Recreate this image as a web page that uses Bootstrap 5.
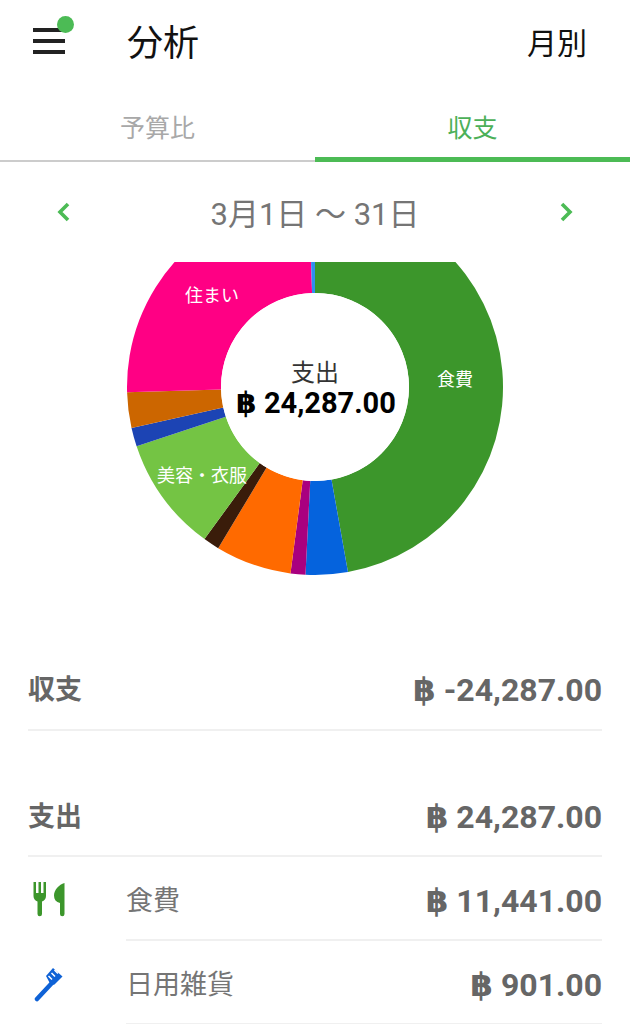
<!DOCTYPE html>
<html lang="ja">
    <head>
        <meta charset="UTF-8" />
        <meta name="viewport" content="width=device-width, initial-scale=1.0" />
        <title>分析</title>
        <link href="https://cdn.jsdelivr.net/npm/bootstrap@5.3.3/dist/css/bootstrap.min.css" rel="stylesheet">
        <style>
            body{
                font-family:Roboto,"Noto Sans CJK JP",sans-serif;
                background:#fff;
                color:#666;
                height:1024px;
                overflow:hidden;
            }
            .app-head{height:88px;padding:0 43px 0 33px;color:#111}
            .menu-btn{width:32px;height:25px;position:relative;margin-bottom:8px;margin-right:62px}
            .menu-btn i{display:block;height:4px;background:#222;margin-bottom:7px}
            .menu-dot{position:absolute;left:24px;top:-12px;width:17px;height:17px;border-radius:50%;background:#4cbb55}
            .head-title{font-size:36px;line-height:1}
            .head-link{font-size:30px;line-height:1}
            .tab-row{height:74px}
            .tab-item{font-size:25px;line-height:1;height:74px;padding-top:28px;text-align:center;color:#a8a8a8;border-bottom:2px solid #ccc}
            .tab-item.active-tab{color:#4cb058;border-bottom:5px solid #4cbb55}
            .date-nav{height:100px;padding:4px 57px 0 57px;font-size:31px;line-height:1;color:#757575}
            .date-nav svg{margin-bottom:4px}
            .donut-box{height:360px}
            .donut-box svg{display:block}
            .baht{font-family:"DejaVu Sans",sans-serif;font-size:1.02em;line-height:.9}
            .sum-row{padding:0 28px}
            .sum-line{border-bottom:2px solid #f0f0f0;font-weight:700;font-size:32px;line-height:1}
            .sum-label{font-size:27px}
            .line-a{height:84px;padding-top:4px;margin-top:25px}
            .line-b{height:84px;margin-top:42px;padding-top:6px}
            .cat-row{height:84px;padding:0 28px;color:#666}
            .cat-icon{width:98px;flex:none}
            .cat-body{border-bottom:2px solid #f0f0f0;height:84px;padding-top:6px}
            .cat-name{font-size:27px;line-height:1;font-weight:400;color:#757575}
            .cat-amount{font-size:32px;line-height:1;font-weight:700}
        </style>
    </head>
    <body>
        <div class="app-head d-flex align-items-center">
            <div class="menu-btn"><i></i><i></i><i></i><span class="menu-dot"></span></div>
            <div class="head-title">分析</div>
            <div class="head-link ms-auto">月別</div>
        </div>

        <div class="row g-0 tab-row">
            <div class="col-6 tab-item">予算比</div>
            <div class="col-6 tab-item active-tab">収支</div>
        </div>

        <div class="date-nav d-flex align-items-center justify-content-between">
            <svg width="13" height="20" viewBox="0 0 13 20"><path d="M11 2 3 10l8 8" fill="none" stroke="#4cbb55" stroke-width="3.6"/></svg>
            <div>3月1日 〜 31日</div>
            <svg width="13" height="20" viewBox="0 0 13 20"><path d="M2 2l8 8-8 8" fill="none" stroke="#4cbb55" stroke-width="3.6"/></svg>
        </div>

        <!-- 円グラフ -->
        <div class="donut-box">
            <svg id="donut" width="630" height="360" viewBox="0 262 630 360">
                <circle cx="315" cy="387" r="94" fill="#fff"/>
            </svg>
        </div>

        <div class="sum-row">
            <div class="sum-line line-a d-flex align-items-center justify-content-between">
                <span class="sum-label">収支</span><span><span class="baht">฿</span> -24,287.00</span>
            </div>
            <div class="sum-line line-b d-flex align-items-center justify-content-between">
                <span class="sum-label">支出</span><span><span class="baht">฿</span> 24,287.00</span>
            </div>
        </div>

        <div class="cat-row d-flex">
            <div class="cat-icon d-flex align-items-center">
                <svg width="38" height="36" viewBox="0 0 38 36">
                    <path d="M5.500 1H8v11h2.500V1H13v11h2.500V1H18v14c0 3-1.700 4.800-4 5.500V33a2.250 2.250 0 0 1-4.500 0V20.500c-2.300-.7-4-2.500-4-5.500z" fill="#3c962b"/>
                    <path d="M36.500 2v31a2.250 2.250 0 0 1-4.500 0V22c-4-1-6-3.500-6-7.500C26 9 31 3.500 36.500 2z" fill="#3c962b"/>
                </svg>
            </div>
            <div class="cat-body flex-grow-1 d-flex align-items-center justify-content-between">
                <span class="cat-name">食費</span><span class="cat-amount"><span class="baht">฿</span> 11,441.00</span>
            </div>
        </div>
        <div class="cat-row d-flex">
            <div class="cat-icon d-flex align-items-center">
                <svg width="38" height="38" viewBox="0 0 38 38">
                    <path d="M9 35 23 20" stroke="#0f62d6" stroke-width="4.500" stroke-linecap="round" fill="none"/>
                    <path d="M18 12 25 4l9.500 8.500-8 8c-2 1-3.500 0-4.500-1z" fill="#0f62d6"/>
                    <path d="M20.500 12l3.500 3.500M23.500 9l3.500 3.500M26.500 6l3.500 3.500" stroke="#fff" stroke-width="1.500" fill="none"/>
                </svg>
            </div>
            <div class="cat-body flex-grow-1 d-flex align-items-center justify-content-between">
                <span class="cat-name">日用雑貨</span><span class="cat-amount"><span class="baht">฿</span> 901.00</span>
            </div>
        </div>

        <script>
            const svg = document.getElementById('donut');
            const NS = 'http://www.w3.org/2000/svg';
            const cx = 315, cy = 387, rOut = 188, rIn = 94;
            // 時計回りの角度(上が0度)
            const slices = [
                [0, 169.9, '#3c962b'],
                [169.9, 182.9, '#0563dd'],
                [182.9, 187.5, '#a9007f'],
                [187.5, 211, '#ff6a00'],
                [211, 216, '#3a1c0a'],
                [216, 251.6, '#74c444'],
                [251.6, 257.4, '#1c44b4'],
                [257.4, 268.4, '#cc6600'],
                [268.4, 358.2, '#ff0084'],
                [358.2, 360, '#2f8ff0']
            ];

            function pt(r, deg){
                const a = deg * Math.PI / 180;
                return (cx + r * Math.sin(a)).toFixed(2) + ' ' + (cy - r * Math.cos(a)).toFixed(2);
            }

            const hole = svg.firstElementChild;
            slices.forEach(s => {
                const big = s[1] - s[0] > 180 ? 1 : 0;
                const p = document.createElementNS(NS, 'path');
                p.setAttribute('d', 'M' + pt(rOut, s[0]) + 'A188 188 0 ' + big + ' 1 ' + pt(rOut, s[1]) +
                    'L' + pt(rIn, s[1]) + 'A94 94 0 ' + big + ' 0 ' + pt(rIn, s[0]) + 'Z');
                p.setAttribute('fill', s[2]);
                svg.insertBefore(p, hole);
            });

            function label(txt, x, y, size, fill, weight){
                const t = document.createElementNS(NS, 'text');
                t.innerHTML = txt;
                t.setAttribute('x', x);
                t.setAttribute('y', y);
                t.setAttribute('text-anchor', 'middle');
                t.setAttribute('font-size', size);
                t.setAttribute('fill', fill);
                if(weight) t.setAttribute('font-weight', weight);
                svg.appendChild(t);
            }
            label('食費', 455, 386, 18, '#fff');
            label('住まい', 212, 302, 18, '#fff');
            label('美容・衣服', 202, 482, 18, '#fff');
            label('支出', 315, 381, 24, '#333');
            label('<tspan class="baht">฿</tspan> 24,287.00', 316, 413, 29, '#000', 700);
        </script>
    </body>
</html>
